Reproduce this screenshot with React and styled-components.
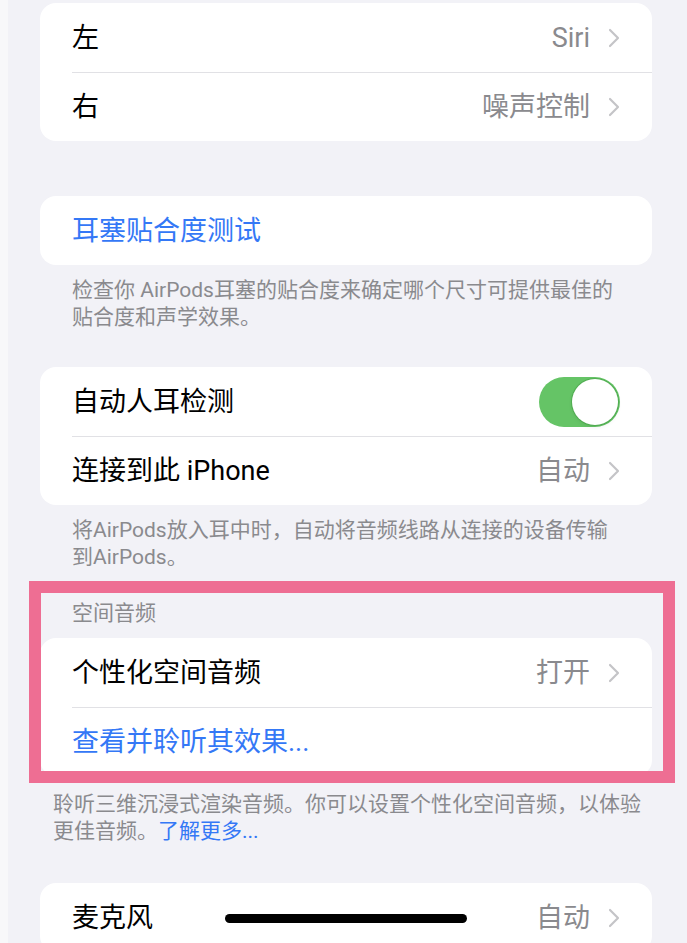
import React from 'react';
import styled, { createGlobalStyle } from 'styled-components';

const GlobalStyle = createGlobalStyle`
  html, body {
    margin: 0;
    padding: 0;
    background: #f2f2f7;
    overflow: hidden;
  }
  body {
    font-family: "Roboto", "Noto Sans CJK SC", sans-serif;
    -webkit-font-smoothing: antialiased;
  }
`;

const Page = styled.div`
  box-sizing: border-box;
  min-height: 100vh;
  border-left: 8px solid #f8f8fa;
  padding: 3px 35px 0 32px;
`;

const Group = styled.section`
  margin-top: ${(p) => p.$top || 0}px;
  position: relative;
`;

// pink highlight frame drawn over the spatial audio section
const Highlighted = styled(Group)`
  &::after {
    content: '';
    position: absolute;
    top: -19px;
    left: -11px;
    right: -23px;
    bottom: -7px;
    border: 12px solid #ee6e93;
    pointer-events: none;
  }
`;

const Card = styled.div`
  background: #ffffff;
  border-radius: 16px;
  overflow: hidden;
`;

const Row = styled.div`
  box-sizing: border-box;
  display: flex;
  align-items: center;
  height: 69px;
  margin-left: 32px;
  padding-right: 32px;

  & + & {
    border-top: 1px solid #e1e1e5;
  }
`;

const Label = styled.span`
  flex: 1;
  font-size: 27px;
  line-height: 32px;
  color: ${(p) => (p.$link ? '#3478f6' : '#000000')};
  white-space: nowrap;
`;

const Value = styled.span`
  font-size: 27px;
  line-height: 32px;
  color: #8a8a8e;
  margin-right: 18px;
`;

const Header = styled.div`
  padding: 0 32px;
  margin-bottom: 11px;
  font-size: 21px;
  line-height: 27px;
  color: #8a8a8e;
`;

const Footer = styled.p`
  margin: 0;
  padding: ${(p) => p.$top || 12}px 0 0 ${(p) => p.$inset ?? 32}px;
  font-size: 21px;
  line-height: 27px;
  color: #8a8a8e;
  white-space: nowrap;
`;

const Link = styled.span`
  color: #3478f6;
`;

const Track = styled.div`
  box-sizing: border-box;
  width: 81px;
  height: 50px;
  border-radius: 25px;
  background: #65c466;
  padding: 2px;
  display: flex;
  justify-content: ${(p) => (p.$on ? 'flex-end' : 'flex-start')};
`;

const Knob = styled.div`
  width: 46px;
  height: 46px;
  border-radius: 50%;
  background: #ffffff;
  box-shadow: 0 0 0 1px rgba(70, 160, 70, 0.6), 0 2px 4px rgba(0, 0, 0, 0.08);
`;

const HomeBar = styled.div`
  position: fixed;
  left: 225px;
  bottom: 20px;
  width: 242px;
  height: 9px;
  border-radius: 5px;
  background: #000000;
`;

const Chevron = () => (
  <svg width="12" height="20" viewBox="0 0 12 20" fill="none">
    <polyline
      points="2,2 10,10 2,18"
      stroke="#c4c4c7"
      strokeWidth="2.2"
      strokeLinecap="round"
      strokeLinejoin="round"
    />
  </svg>
);

const Switch = ({ on }) => (
  <Track $on={on}>
    <Knob />
  </Track>
);

const NavRow = ({ label, value, link }) => (
  <Row>
    <Label $link={link}>{label}</Label>
    {value && <Value>{value}</Value>}
    {value && <Chevron />}
  </Row>
);

export default function App() {
  return (
    <>
      <GlobalStyle />
      <Page>
        <Group>
          <Card>
            <NavRow label="左" value="Siri" />
            <NavRow label="右" value="噪声控制" />
          </Card>
        </Group>

        <Group $top={55}>
          <Card>
            <NavRow label="耳塞贴合度测试" link />
          </Card>
          <Footer>
            检查你 AirPods耳塞的贴合度来确定哪个尺寸可提供最佳的
            <br />
            贴合度和声学效果。
          </Footer>
        </Group>

        <Group $top={36}>
          <Card>
            <Row>
              <Label>自动人耳检测</Label>
              <Switch on />
            </Row>
            <NavRow label="连接到此 iPhone" value="自动" />
          </Card>
          <Footer>
            将AirPods放入耳中时，自动将音频线路从连接的设备传输
            <br />
            到AirPods。
          </Footer>
        </Group>

        <Highlighted $top={29}>
          <Header>空间音频</Header>
          <Card>
            <NavRow label="个性化空间音频" value="打开" />
            <NavRow label="查看并聆听其效果..." link />
          </Card>
        </Highlighted>
        <Footer $top={15} $inset={13}>
          聆听三维沉浸式渲染音频。你可以设置个性化空间音频，以体验
          <br />
          更佳音频。<Link>了解更多...</Link>
        </Footer>

        <Group $top={38}>
          <Card>
            <NavRow label="麦克风" value="自动" />
          </Card>
        </Group>
      </Page>
      <HomeBar />
    </>
  );
}
